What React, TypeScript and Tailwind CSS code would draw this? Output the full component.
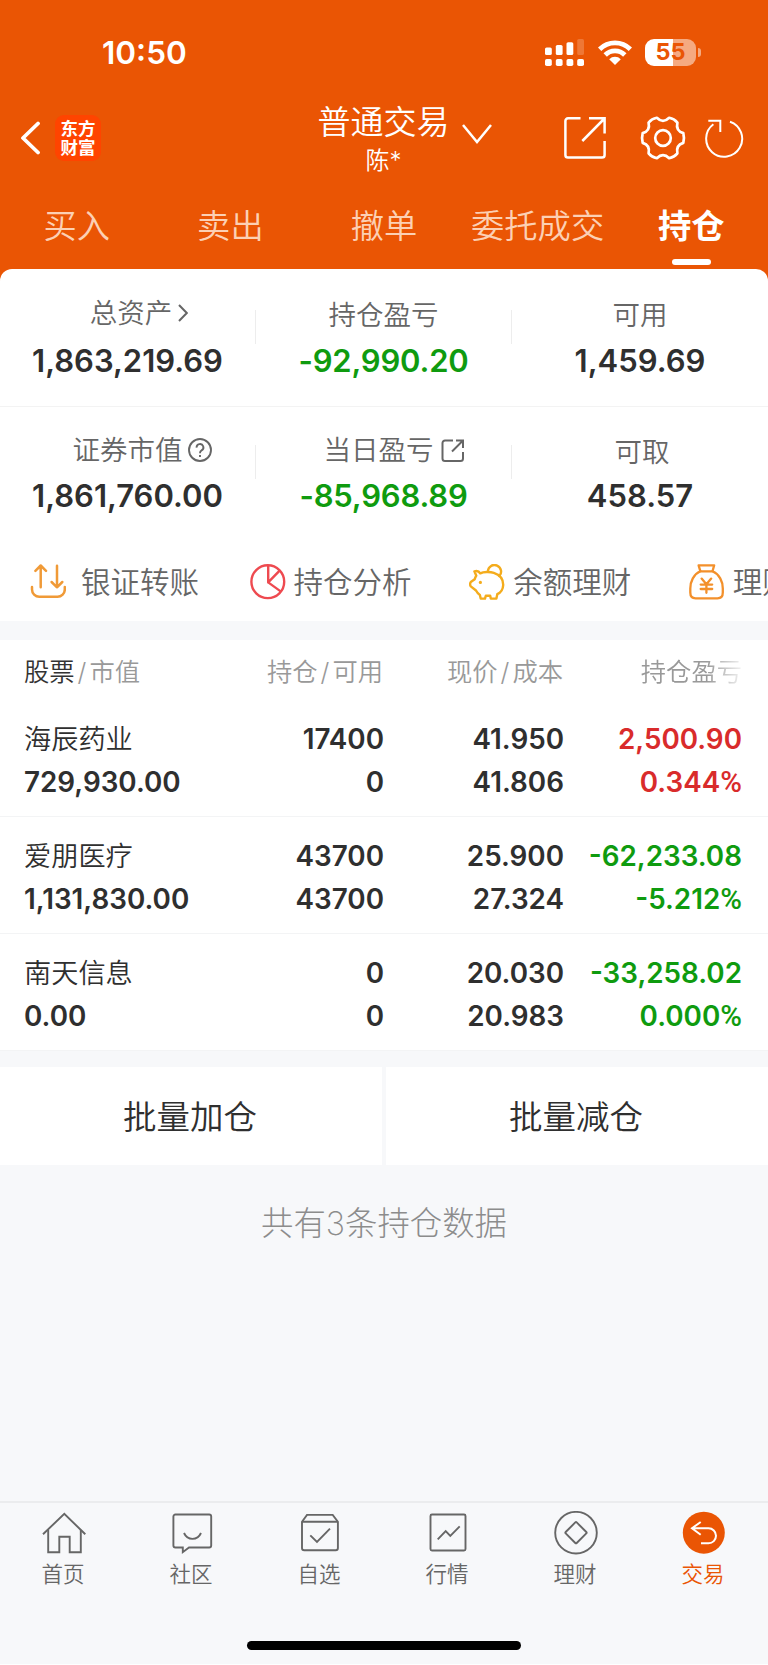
import React from 'react';

const navTabs = ['买入', '卖出', '撤单', '委托成交', '持仓'];

const holdings = [
  {
    name: '海辰药业',
    value: '729,930.00',
    amount: '17400',
    available: '0',
    price: '41.950',
    cost: '41.806',
    profit: '2,500.90',
    rate: '0.344',
    color: 'text-[#d92b2b]',
  },
  {
    name: '爱朋医疗',
    value: '1,131,830.00',
    amount: '43700',
    available: '43700',
    price: '25.900',
    cost: '27.324',
    profit: '-62,233.08',
    rate: '-5.212',
    color: 'text-[#0f9b0f]',
  },
  {
    name: '南天信息',
    value: '0.00',
    amount: '0',
    available: '0',
    price: '20.030',
    cost: '20.983',
    profit: '-33,258.02',
    rate: '0.000',
    color: 'text-[#0f9b0f]',
  },
];

// Status bar icons
const SignalIcon = () => (
  <svg className="w-[39px] h-[27px]" viewBox="0 0 39 27" fill="#fff">
    <rect x="0" y="8.5" width="6.8" height="7.5" rx="1.6" />
    <rect x="10.8" y="6" width="6.8" height="10" rx="1.6" />
    <rect x="21.5" y="3.2" width="6.8" height="12.8" rx="1.6" />
    <rect x="32.2" y="0" width="6.8" height="16" rx="1.6" opacity="0.2" />
    <rect x="0" y="20" width="6.8" height="7" rx="1.8" />
    <rect x="10.8" y="20" width="6.8" height="7" rx="1.8" />
    <rect x="21.5" y="20" width="6.8" height="7" rx="1.8" />
    <rect x="32.2" y="20" width="6.8" height="7" rx="1.8" />
  </svg>
);

const WifiIcon = () => (
  <svg className="w-[34px] h-[25px]" viewBox="0 0 34 25" fill="none" stroke="#fff" strokeWidth="4.8">
    <path d="M1.6 9.2A21.8 21.8 0 0 1 32.4 9.2" />
    <path d="M7.2 15A13.8 13.8 0 0 1 26.8 15" />
    <path d="M17 25L11.2 19.2A8.2 8.2 0 0 1 22.8 19.2Z" fill="#fff" stroke="none" />
  </svg>
);

// Header icons
const ShareIcon = () => (
  <svg className="w-[42px] h-[42px]" viewBox="0 0 42 42" fill="none" stroke="#fff" strokeWidth="2.5">
    <path d="M16.5 1.3H4A2.6 2.6 0 0 0 1.4 3.9V38A2.6 2.6 0 0 0 4 40.6H38A2.6 2.6 0 0 0 40.6 38V24" />
    <path d="M25 1.3H40.6V16.5M40 2L18.3 24" />
  </svg>
);

const GearIcon = () => (
  <svg className="w-[46px] h-[44px]" viewBox="-23 -22 46 44" fill="none" stroke="#fff" strokeWidth="2.7" strokeLinejoin="round">
    <path d="M20.3 -4.84Q21.6 0 20.3 4.84Q12.56 7.25 14.4 15.4Q11.2 19.2 6.2 20.2Q0 14 -6.2 20.2Q-11.2 19.2 -14.4 15.4Q-12.56 7.25 -20.3 4.84Q-21.6 0 -20.3 -4.84Q-12.56 -7.25 -14.4 -15.4Q-11.2 -19.2 -6.2 -20.2Q0 -14 6.2 -20.2Q11.2 -19.2 14.4 -15.4Q12.56 -7.25 20.3 -4.84Z" />
    <circle r="7.8" />
  </svg>
);

const RefreshIcon = () => (
  <svg className="w-[40px] h-[40px]" viewBox="0 0 40 40" fill="none" stroke="#fff" strokeWidth="2">
    <path d="M25 3.7A18 18 0 1 1 8.4 6.3" />
    <path d="M3.3 2.8H15.3V14" />
  </svg>
);

// Shortcut icons
const TransferIcon = () => (
  <svg className="w-9 h-9" viewBox="0 0 36 36" fill="none" stroke="#f09a37" strokeWidth="2.5" strokeLinecap="round" strokeLinejoin="round">
    <path d="M10.7 23.2V1.8M5.4 6.8L10.7 1.5L16 6.8" />
    <path d="M27 1.8V23.2M21.6 18L27 23.3L32.3 18" />
    <path d="M2 23V25.5A7.3 7.3 0 0 0 9.3 32.8H27.5A7.3 7.3 0 0 0 34.8 25.5V23" />
  </svg>
);

const PieIcon = () => (
  <svg className="w-9 h-9" viewBox="0 0 36 36" fill="none" stroke="#ee4a50" strokeWidth="2.4" strokeLinejoin="round">
    <circle cx="17.8" cy="17.7" r="16.4" />
    <path d="M18.2 1.2V18.4L29.6 6.6M18.2 18.4L31 27.6" />
  </svg>
);

const PiggyIcon = () => (
  <svg className="w-9 h-9" viewBox="0 0 36 36" fill="none" stroke="#f4ac1c" strokeWidth="2.4" strokeLinecap="round" strokeLinejoin="round">
    <path d="M5.4 7.3C8.2 6.5 10.2 7.5 11.2 9.3C14.5 7.7 21 7.6 24.8 8.8C31 10.8 34.3 15.5 34.2 21C34 25.5 31.5 28.8 28.3 30.2L27.4 34.6H21.8L21.2 31.7H16.8L16 34.6H11.7L10.9 31C9 29.8 8 28.4 7 26.5L1.8 22.4C.8 21.4 1 18.9 1.8 18L5.7 15.3C6 14 6.8 12.5 7.3 11.7Z" />
    <path d="M18.9 7A6.6 6.6 0 1 1 30.4 12" />
    <circle cx="11.4" cy="18.4" r="1.6" fill="#f4ac1c" stroke="none" />
  </svg>
);

const MoneyBagIcon = () => (
  <svg className="w-9 h-9" viewBox="0 0 36 36" fill="none" stroke="#f3902b" strokeWidth="2.3" strokeLinecap="round" strokeLinejoin="round">
    <path d="M9.6 1.3H25.2L23.5 7.3H11.4Z" />
    <path d="M11.4 7.3C4.6 10.2 1.3 17.5 1.3 24.5V28.5C1.3 32.5 3 34.3 6.6 34.3H28.5C32 34.3 33.8 32.5 33.8 28.5V24.5C33.8 17.5 30.4 10.2 23.5 7.3" />
    <path d="M12.6 14.6L17.4 20.2L22.2 14.6M11.7 20.6H23.2M11.7 25H23.2M17.4 20.5V28.8" />
  </svg>
);

const shortcuts = [
  { label: '银证转账', icon: <TransferIcon />, gap: 'gap-[15px]' },
  { label: '持仓分析', icon: <PieIcon />, gap: 'gap-2' },
  { label: '余额理财', icon: <PiggyIcon />, gap: 'gap-2' },
  { label: '理财', icon: <MoneyBagIcon />, gap: 'gap-2' },
];

// Bottom bar icons
const bottomTabs = [
  {
    label: '首页',
    icon: (
      <>
        <path d="M1 23.3L22.3 2.8L43.3 23.3" />
        <path d="M6.2 19V41.2H17.3V25.8H27.7V41.2H38.8V19" />
      </>
    ),
  },
  {
    label: '社区',
    icon: (
      <>
        <path d="M5.4 3.5H39.2A2 2 0 0 1 41.2 5.5V34.5A2 2 0 0 1 39.2 36.5H19L12.8 41.2V36.5H5.4A2 2 0 0 1 3.4 34.5V5.5A2 2 0 0 1 5.4 3.5Z" />
        <path d="M14 22C17.5 29.8 27.5 29.8 31 22" />
      </>
    ),
  },
  {
    label: '自选',
    icon: (
      <>
        <path d="M4 10.7L9 3.9H34.7L39.9 10.7V37A2.3 2.3 0 0 1 37.6 39.3H6.3A2.3 2.3 0 0 1 4 37Z" />
        <path d="M4 10.7H39.9M12.3 24.3L19 31L32 17.7" />
      </>
    ),
  },
  {
    label: '行情',
    icon: (
      <>
        <rect x="4.5" y="3.5" width="35" height="36" rx="1.5" />
        <path d="M11.7 28.3L19.7 20L24.3 24.8L33.7 15.3" />
      </>
    ),
  },
  {
    label: '理财',
    icon: (
      <>
        <circle cx="22" cy="21.7" r="20.8" />
        <path d="M21.3 11.4a1 1 0 0 1 1.4 0L32.3 21a1 1 0 0 1 0 1.4L22.7 32a1 1 0 0 1-1.4 0L11.7 22.4a1 1 0 0 1 0-1.4Z" />
      </>
    ),
  },
];

type StatProps = {
  label: string;
  value: string;
  icon?: React.ReactNode;
  green?: boolean;
  last?: boolean;
  labelClass?: string;
};

const Stat = ({ label, value, icon, green, last, labelClass = '' }: StatProps) => (
  <div className="flex">
    <div className="flex-1 flex flex-col items-center">
      <div className={`flex items-center h-10 text-[27.5px] text-[#666] ${labelClass}`}>
        <span>{label}</span>
        {icon}
      </div>
      <div className={`mt-2 h-10 leading-10 text-[31px] font-semibold ${green ? 'text-[#0f9b0f] tracking-[-0.2px]' : 'text-[#2f2f2f]'}`}>
        {value}
      </div>
    </div>
    {!last && <div className="w-px h-[34px] mt-[17px] bg-[#ededed]" />}
  </div>
);

const App: React.FC = () => {
  return (
    <div className="w-[768px] h-[1664px] flex flex-col bg-[#f7f8fa] overflow-hidden font-['Inter','Noto_Sans_CJK_SC',sans-serif] font-[350]">
      {/* Header */}
      <div className="h-[281px] bg-[#ea5504]">
        {/* Status bar */}
        <div className="h-[104px] flex items-center pl-[102px] pr-[67px]">
          <div className="mt-0.5 text-[31.5px] leading-[32px] font-semibold text-white">10:50</div>
          <div className="ml-auto flex items-center">
            <SignalIcon />
            <div className="ml-[14px]"><WifiIcon /></div>
            <div className="ml-[13px] w-[51px] h-[27px] rounded-[9px] bg-[linear-gradient(to_right,#fff_28px,#f5aa81_28px)] flex items-center justify-center text-[23.5px] leading-none font-bold text-[#ea5504]">
              55
            </div>
            <div className="ml-[2px] w-[3px] h-[9px] rounded-r-full bg-[#f5aa81]" />
          </div>
        </div>

        {/* Title bar */}
        <div className="h-[68px] grid grid-cols-[318px_1fr_204px] grid-rows-[68px] items-center">
          <div className="flex items-center pl-5">
            <svg className="w-5 h-[34px]" viewBox="0 0 20 34" fill="none" stroke="#fff" strokeWidth="3.8" strokeLinecap="round" strokeLinejoin="round">
              <path d="M18 2.5L3 17L18 31.5" />
            </svg>
            <div className="ml-[15px] w-[46px] h-[46px] rounded-[9px] bg-[#ff4400] flex flex-col items-center justify-center text-[17.5px] leading-[19px] font-bold text-white">
              <span>东方</span>
              <span>财富</span>
            </div>
          </div>
          <div className="flex items-center pt-1.5">
            <div className="w-[131px] flex flex-col items-center text-white">
              <div className="text-[33px] leading-[40px] whitespace-nowrap">普通交易</div>
              <div className="text-[24px] leading-[38px]">陈*</div>
            </div>
            <svg className="ml-3 w-[32px] h-[20px] -mt-3.5" viewBox="0 0 32 20" fill="none" stroke="#fff" strokeWidth="2.5">
              <path d="M2 1L16 18L30 1" />
            </svg>
          </div>
          <div className="flex items-center">
            <ShareIcon />
            <div className="ml-[34px]"><GearIcon /></div>
            <div className="ml-[19px]"><RefreshIcon /></div>
          </div>
        </div>

        {/* Trade tabs */}
        <div className="h-[97px] grid grid-cols-5">
          {navTabs.map((tab) => (
            <div key={tab} className="flex flex-col items-center pt-[29px]">
              <div className={tab === '持仓' ? 'text-[33.3px] leading-[50px] font-bold text-white' : 'text-[33.3px] leading-[50px] text-[#fcd0b4]'}>
                {tab}
              </div>
              {tab === '持仓' && <div className="mt-2 w-[39px] h-[6px] rounded-full bg-white" />}
            </div>
          ))}
        </div>
        <div className="h-3 rounded-t-[14px] bg-white" />
      </div>

      {/* Account summary */}
      <div className="bg-white">
        <div className="h-[126px] grid grid-cols-3 pt-3 border-b border-[#f3f3f3]">
          <Stat
            label="总资产"
            value="1,863,219.69"
            labelClass="pt-0.5 pl-[23px]"
            icon={
              <svg className="ml-[6px] mb-0.5 w-[10px] h-[18px]" viewBox="0 0 10 18" fill="none" stroke="#666" strokeWidth="2">
                <path d="M1 1L8.8 9L1 17" />
              </svg>
            }
          />
          <Stat label="持仓盈亏" value="-92,990.20" green labelClass="pt-1.5" />
          <Stat label="可用" value="1,459.69" last labelClass="pt-1.5" />
        </div>
        <div className="h-[123px] grid grid-cols-3 pt-[21px]">
          <Stat
            label="证券市值"
            value="1,861,760.00"
            labelClass="pt-1.5 pl-[29px]"
            icon={
              <svg className="ml-[5px] mb-0.5 w-6 h-6" viewBox="0 0 24 24" fill="none" stroke="#666" strokeWidth="1.9">
                <circle cx="12" cy="12" r="11" />
                <path d="M8.6 9.6A3.4 3.4 0 1 1 13.6 12.4Q12 13.3 12 15.2M12 16.9V19" />
              </svg>
            }
          />
          <Stat
            label="当日盈亏"
            value="-85,968.89"
            green
            labelClass="pt-1.5 pl-5"
            icon={
              <svg className="ml-[7px] mb-0.5 w-[23px] h-[23px]" viewBox="0 0 23 23" fill="none" stroke="#666" strokeWidth="2">
                <path d="M12 1.5H4A2.5 2.5 0 0 0 1.5 4V19.5A2.5 2.5 0 0 0 4 22H19.5A2.5 2.5 0 0 0 22 19.5V13" />
                <path d="M15 1.5H22V9M21.5 2L11 12.5" />
              </svg>
            }
          />
          <Stat label="可取" value="458.57" last labelClass="pt-2.5 pl-1" />
        </div>

        {/* Shortcuts */}
        <div className="h-[91px] flex items-center pl-[30px] pt-[13px] overflow-hidden">
          {shortcuts.map((item) => (
            <div key={item.label} className={`w-[219.6px] shrink-0 flex items-center ${item.gap}`}>
              {item.icon}
              <span className="text-[29.5px] leading-[44px] text-[#666] whitespace-nowrap">{item.label}</span>
            </div>
          ))}
        </div>
      </div>

      {/* Holdings */}
      <div className="mt-[19px] bg-white">
        <div className="h-[60px] pt-1 grid grid-cols-[1fr_150px_180px_179px] items-center pl-6 pr-[26px] text-[25.3px] text-[#999] text-right">
          <div className="text-left">
            <span className="text-[#333]">股票</span><span className="mx-[3px]">/</span>市值
          </div>
          <div>持仓<span className="mx-[3px]">/</span>可用</div>
          <div>现价<span className="mx-[3px]">/</span>成本</div>
          <div className="flex justify-end">
            <span className="[mask-image:linear-gradient(to_right,#000_65%,transparent_105%)]">持仓盈亏</span>
          </div>
        </div>
        {holdings.map((item) => (
          <div key={item.name} className="h-[117px] pt-[18px] border-b border-[#f3f4f5] grid grid-cols-[1fr_150px_180px_179px] pl-6 pr-[26px] text-[27.8px] leading-[43px] font-semibold text-[#2f2f2f] text-right">
            <div className="text-left">
              <div className="text-[27.2px] font-[350]">{item.name}</div>
              <div>{item.value}</div>
            </div>
            <div className="-mr-px">
              <div>{item.amount}</div>
              <div>{item.available}</div>
            </div>
            <div className="-mr-px">
              <div>{item.price}</div>
              <div>{item.cost}</div>
            </div>
            <div className={item.color}>
              <div>{item.profit}</div>
              <div>{item.rate}<span className="font-['Roboto'] text-[29.5px] font-medium">%</span></div>
            </div>
          </div>
        ))}
      </div>

      {/* Batch actions */}
      <div className="mt-4 grid grid-cols-2 gap-1">
        <button className="h-[98px] pt-0.5 pr-0.5 bg-white text-[33.5px] text-[#2f2f2f]">批量加仓</button>
        <button className="h-[98px] pt-0.5 pr-0.5 bg-white text-[33.5px] text-[#2f2f2f]">批量减仓</button>
      </div>

      <div className="mt-9 pt-px text-center text-[32.4px] leading-[44px] font-extralight text-[#8c8c8c]">共有3条持仓数据</div>

      {/* Bottom bar */}
      <div className="mt-auto h-[163px] border-t-2 border-[#ebecee] flex flex-col items-center">
        <div className="w-full grid grid-cols-6 pt-2">
          {bottomTabs.map((tab) => (
            <div key={tab.label} className="flex flex-col items-center">
              <svg className="w-11 h-11" viewBox="0 0 44 44" fill="none" stroke="#666" strokeWidth="1.9">
                {tab.icon}
              </svg>
              <span className="mt-1 mr-0.5 text-[21.5px] leading-[30px] text-[#666]">{tab.label}</span>
            </div>
          ))}
          <div className="flex flex-col items-center">
            <svg className="w-11 h-11" viewBox="0 0 44 44" fill="none" stroke="#fff" strokeWidth="2">
              <circle cx="21.8" cy="21.7" r="21" fill="#ea5504" stroke="none" />
              <path d="M18.7 11L10 17.3L18.7 23.7M10 17.3H26.5A7.5 7.5 0 0 1 26.5 32.3H19" />
            </svg>
            <span className="mt-1 mr-0.5 text-[21.5px] leading-[30px] text-[#ea5504]">交易</span>
          </div>
        </div>
        <div className="mt-[52px] w-[274px] h-[9px] shrink-0 rounded-full bg-black" />
      </div>
    </div>
  );
};

export default App;
